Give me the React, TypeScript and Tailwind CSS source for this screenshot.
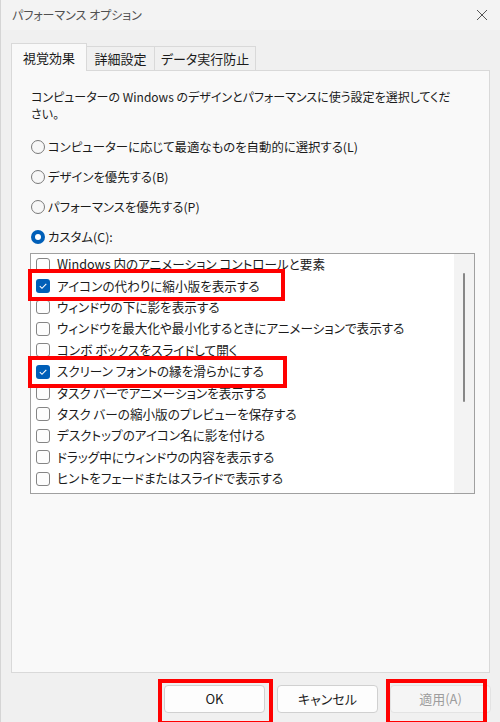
import React from "react";

const font = "font-['Noto_Sans_CJK_JP','Noto_Sans',sans-serif] [font-feature-settings:'palt']";

const items: { label: string; checked?: boolean }[] = [
  { label: "Windows 内のアニメーション コントロールと要素" },
  { label: "アイコンの代わりに縮小版を表示する", checked: true },
  { label: "ウィンドウの下に影を表示する" },
  { label: "ウィンドウを最大化や最小化するときにアニメーションで表示する" },
  { label: "コンボ ボックスをスライドして開く" },
  { label: "スクリーン フォントの縁を滑らかにする", checked: true },
  { label: "タスク バーでアニメーションを表示する" },
  { label: "タスク バーの縮小版のプレビューを保存する" },
  { label: "デスクトップのアイコン名に影を付ける" },
  { label: "ドラッグ中にウィンドウの内容を表示する" },
  { label: "ヒントをフェードまたはスライドで表示する" },
  { label: "マウス ポインターの下に影を表示する" },
];

function Radio({ label, selected }: { label: string; selected?: boolean }) {
  return (
    <div className="flex h-[30px] items-center">
      {selected ? (
        <span className="flex h-[14px] w-[14px] items-center justify-center rounded-full bg-[#005fb8]">
          <span className="h-[6px] w-[6px] rounded-full bg-white" />
        </span>
      ) : (
        <span className="h-[14px] w-[14px] rounded-full border border-[#7a7a7a] bg-[#f7f7f7]" />
      )}
      <span className="ml-[3px] text-[12.4px] text-[#1b1b1b]">{label}</span>
    </div>
  );
}

function Check({ checked }: { checked?: boolean }) {
  if (checked) {
    return (
      <span className="flex h-[14px] w-[14px] shrink-0 items-center justify-center rounded-[3px] bg-[#005fb8]">
        <svg width="10" height="10" viewBox="0 0 10 10">
          <path d="M1.8 5.2 L4 7.3 L8.3 2.8" fill="none" stroke="white" strokeWidth="1.1" />
        </svg>
      </span>
    );
  }
  return <span className="h-[14px] w-[14px] shrink-0 rounded-[3px] border border-[#858585] bg-[#fdfdfd]" />;
}

export default function App() {
  return (
    <div className={`relative flex h-[722px] w-[500px] flex-col overflow-hidden border-l border-[#d5d5d5] bg-[#f0f0f0] ${font}`}>
      {/* title bar */}
      <div className="flex h-[30px] shrink-0 items-center justify-between bg-[#f3f3f3] pl-[11px] pr-[12px]">
        <span className="text-[12px] text-[#505050]">パフォーマンス オプション</span>
        <svg width="12" height="12" viewBox="0 0 12 12">
          <path d="M1 1 L11 11 M11 1 L1 11" stroke="#555" strokeWidth="1" />
        </svg>
      </div>

      {/* tabs */}
      <div className="mt-[13px] flex items-end pl-[10px]">
        <div className="relative z-10 -mb-px flex h-[28px] w-[76px] items-center justify-center border border-b-0 border-[#d9d9d9] bg-[#f9f9f9] text-[13px] text-[#1b1b1b]">
          視覚効果
        </div>
        <div className="flex h-[24px] w-[68px] items-center justify-center border border-l-0 border-b-0 border-[#d9d9d9] text-[13px] text-[#1b1b1b]">
          詳細設定
        </div>
        <div className="flex h-[24px] w-[101px] items-center justify-center border border-l-0 border-b-0 border-[#d9d9d9] text-[13px] text-[#1b1b1b]">
          データ実行防止
        </div>
      </div>

      {/* panel */}
      <div className="mx-[10px] h-[603px] shrink-0 border border-[#d9d9d9] bg-[#f9f9f9] pl-[19px] pt-[17px]">
        <p className="whitespace-nowrap text-[12px] leading-[17px] text-[#1b1b1b]">
          コンピューターの Windows のデザインとパフォーマンスに使う設定を選択してくだ
          <br />
          さい。
        </p>
        <div className="mt-[10px]">
          <Radio label="コンピューターに応じて最適なものを自動的に選択する(L)" />
          <Radio label="デザインを優先する(B)" />
          <Radio label="パフォーマンスを優先する(P)" />
          <Radio label="カスタム(C):" selected />
        </div>
        <div className="-ml-px mt-px flex h-[241px] w-[445px] overflow-hidden border border-[#a0a0a0] bg-white">
          <div className="flex-1 overflow-hidden">
            {items.map((it) => (
              <div key={it.label} className="flex h-[21.4px] items-center pl-[5px]">
                <Check checked={it.checked} />
                <span className="ml-[7px] whitespace-nowrap text-[12.6px] text-[#1b1b1b]">{it.label}</span>
              </div>
            ))}
          </div>
          <div className="flex w-[20px] justify-center bg-[#f3f3f3] pt-[19px]">
            <div className="h-[129px] w-[2px] rounded-full bg-[#878787]" />
          </div>
        </div>
      </div>

      {/* buttons */}
      <div className="mt-[12px] flex justify-end gap-[12px] pr-[9px]">
        <button className="h-[28px] w-[101px] rounded-[4px] border border-[#d0d0d0] bg-[#fdfdfd] text-[13px] text-[#1b1b1b]">
          OK
        </button>
        <button className="h-[28px] w-[101px] rounded-[4px] border border-[#d0d0d0] bg-[#fdfdfd] text-[13px] text-[#1b1b1b]">
          キャンセル
        </button>
        <button className="h-[28px] w-[101px] rounded-[4px] border border-[#e3e3e3] bg-[#f5f5f5] text-[13px] text-[#9d9d9d]">
          適用(A)
        </button>
      </div>

      {/* annotation boxes */}
      <div className="absolute left-[27px] top-[269px] h-[32px] w-[257px] border-[4px] border-[#ff0000]" />
      <div className="absolute left-[27px] top-[356px] h-[32px] w-[259px] border-[4px] border-[#ff0000]" />
      <div className="absolute left-[157px] top-[679px] h-[46px] w-[115px] border-[4px] border-[#ff0000]" />
      <div className="absolute left-[385px] top-[679px] h-[46px] w-[101px] border-[4px] border-[#ff0000]" />
    </div>
  );
}
